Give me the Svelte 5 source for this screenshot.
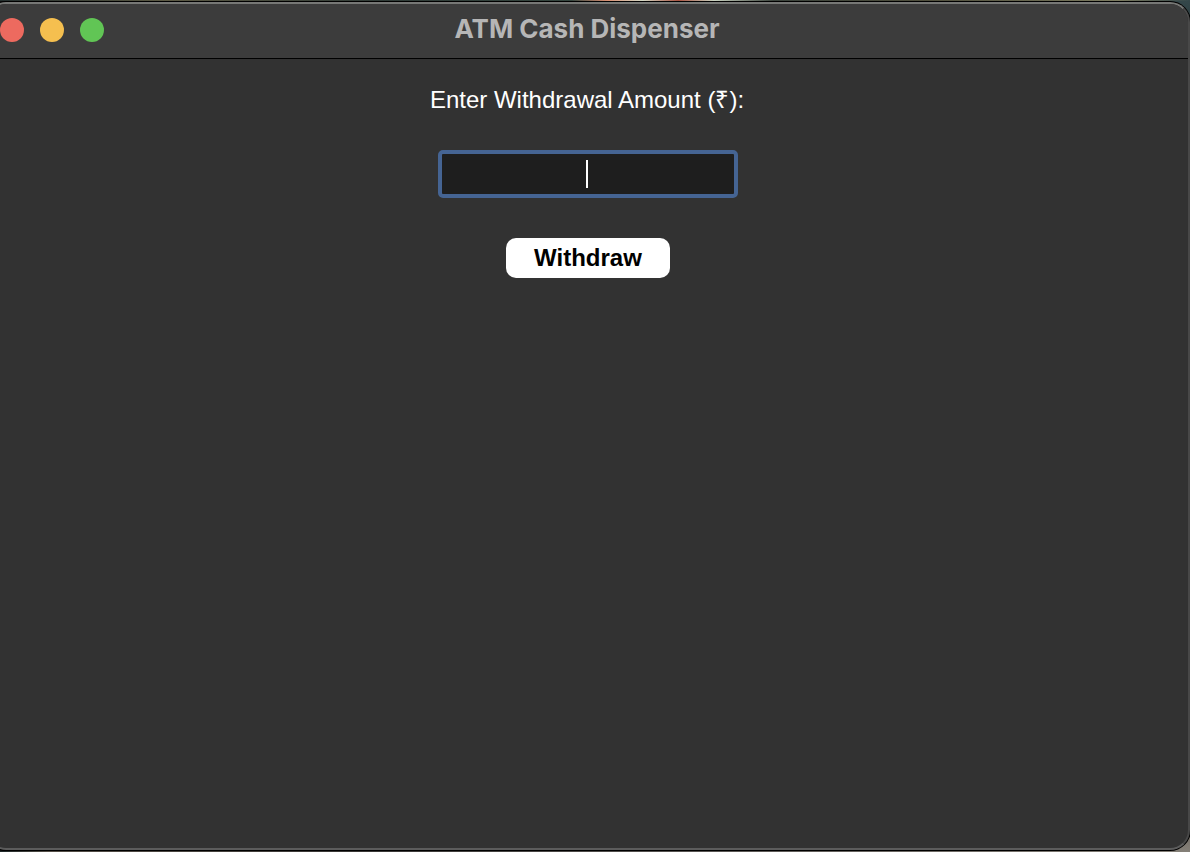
<script>
  let amount = $state('');
</script>

<div class="desktop">
  <main class="window">
    <header class="titlebar">
      <div class="lights">
        <button class="light close" type="button" aria-label="Close"></button>
        <button class="light minimize" type="button" aria-label="Minimize"></button>
        <button class="light zoom" type="button" aria-label="Zoom"></button>
      </div>
      <h1>ATM Cash Dispenser</h1>
    </header>
    <form onsubmit={(event) => event.preventDefault()}>
      <label for="amount">Enter Withdrawal Amount (₹):</label>
      <div class="field">
        <input id="amount" type="text" inputmode="decimal" autocomplete="off" bind:value={amount} />
        {#if amount === ''}
          <span class="caret"></span>
        {/if}
      </div>
      <button class="withdraw" type="submit">Withdraw</button>
    </form>
  </main>
</div>

<style>
  :global(body) {
    margin: 0;
    background: #151817;
  }

  .desktop {
    box-sizing: border-box;
    min-height: 100vh;
    display: flex;
    padding: 2px 0;
    overflow: hidden;
    background:
      linear-gradient(90deg, #25302f, #5d5a45 14%, #303b37 32%, #35463f 48%, #d98f72 51%, #d4d8c5 54%, #a95442 57%, #c9d2c0 60%, #3b433c 65%, #504f3d 78%, #7c7b60 94%, #34474a) top / 100% 1px no-repeat,
      linear-gradient(90deg, #1d2727, #554f47 4%, #393735 30%, #595653 60%, #858078) bottom / 100% 1px no-repeat,
      linear-gradient(#34474a, #2b3a3d) top right / 30px 30px no-repeat,
      linear-gradient(#68625c, #858078) bottom right / 30px 30px no-repeat,
      #151817;
  }

  .window {
    box-sizing: border-box;
    flex: 1;
    display: flex;
    flex-direction: column;
    margin-left: -14px;
    border: 2px solid #5c5c5c;
    border-top-color: #777876;
    border-right-color: #484848;
    border-radius: 20px;
    box-shadow: 0 0 0 1px #000;
    background: #323232;
    overflow: hidden;
  }

  .titlebar {
    box-sizing: border-box;
    height: 55px;
    display: grid;
    grid-template-columns: 1fr auto 1fr;
    align-items: center;
    padding: 0 12px 2px;
    border-bottom: 1px solid #000;
    background: #3c3c3c;
  }

  .lights {
    display: flex;
    gap: 16px;
  }

  .light {
    width: 24px;
    height: 24px;
    padding: 0;
    border: 0;
    border-radius: 50%;
  }

  .close {
    background: #ed6a5f;
  }

  .minimize {
    background: #f5bf4f;
  }

  .zoom {
    background: #61c555;
  }

  h1 {
    margin: 0;
    padding: 0 2px 2px 0;
    color: #b6b6b6;
    font: 700 26px/30px Inter, sans-serif;
  }

  form {
    display: flex;
    flex-direction: column;
    align-items: center;
    padding-top: 27px;
  }

  label {
    padding-right: 2px;
    color: #fff;
    font: 24px/28px "Liberation Sans", Arial, sans-serif;
  }

  .field {
    position: relative;
    width: 300px;
    max-width: 100%;
    margin: 36px 0 40px;
  }

  input {
    box-sizing: border-box;
    display: block;
    width: 100%;
    height: 48px;
    padding: 0 8px;
    border: 4px solid #456493;
    border-radius: 5px;
    outline: 0;
    background: #1e1e1e;
    color: #fff;
    font: 24px/28px "Liberation Sans", Arial, sans-serif;
    text-align: center;
  }

  .caret {
    position: absolute;
    top: 10px;
    left: calc(50% - 2px);
    width: 2px;
    height: 28px;
    background: #fff;
    pointer-events: none;
  }

  .withdraw {
    height: 40px;
    padding: 0 28px;
    border: 0;
    border-radius: 10px;
    background: #fff;
    color: #000;
    font: 700 24px/28px "Liberation Sans", Arial, sans-serif;
  }
</style>
